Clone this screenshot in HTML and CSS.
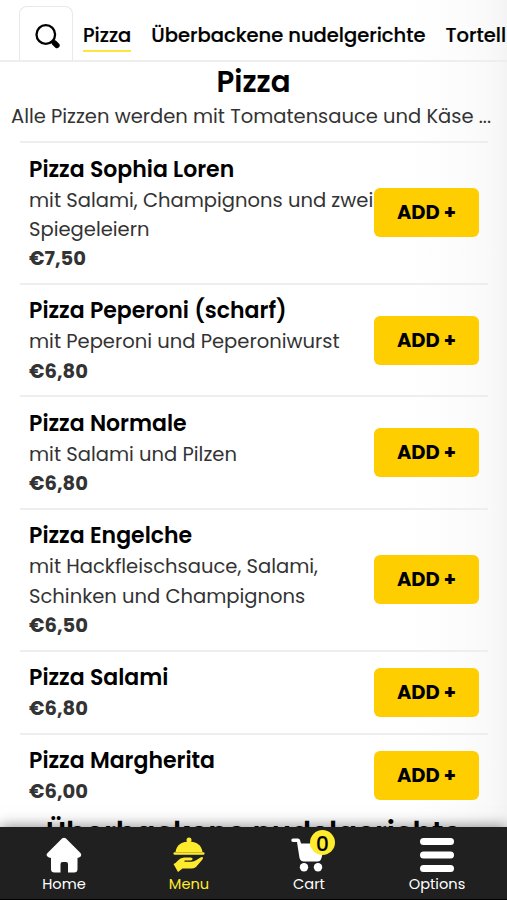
FILE: index.html
```html
<!DOCTYPE html>
<html lang="de">
<head>
<meta charset="utf-8">
<title>Pizza</title>
<link rel="stylesheet" href="styles.css">
</head>
<body>
<div class="app">
  <header class="tabs">
    <button class="search" aria-label="Suche">
      <svg width="26" height="26" viewBox="0 0 26 26"><circle cx="10.800" cy="10.500" r="9.300" fill="none" stroke="#000" stroke-width="2.300"/><path d="M17.500 17l1.500 1.500" stroke="#000" stroke-width="2.500"/><path d="M19.200 18.800l2.800 2.700" stroke="#000" stroke-width="5.400" stroke-linecap="round"/></svg>
    </button>
    <a class="tab active">Pizza</a>
    <a class="tab">Überbackene nudelgerichte</a>
    <a class="tab">Tortell</a>
  </header>
  <main>
    <h1 class="heading">Pizza</h1>
    <p class="intro">Alle Pizzen werden mit Tomatensauce und Käse ...</p>
    <ul class="list">
      <li class="item"><div class="info"><h2>Pizza Sophia Loren</h2><p>mit Salami, Champignons und zwei<br>Spiegeleiern</p><b>€7,50</b></div><button class="add">ADD +</button></li>
      <li class="item"><div class="info"><h2>Pizza Peperoni (scharf)</h2><p>mit Peperoni und Peperoniwurst</p><b>€6,80</b></div><button class="add">ADD +</button></li>
      <li class="item"><div class="info"><h2>Pizza Normale</h2><p>mit Salami und Pilzen</p><b>€6,80</b></div><button class="add">ADD +</button></li>
      <li class="item"><div class="info"><h2>Pizza Engelche</h2><p>mit Hackfleischsauce, Salami,<br>Schinken und Champignons</p><b>€6,50</b></div><button class="add">ADD +</button></li>
      <li class="item"><div class="info"><h2>Pizza Salami</h2><b>€6,80</b></div><button class="add">ADD +</button></li>
      <li class="item"><div class="info"><h2>Pizza Margherita</h2><b>€6,00</b></div><button class="add">ADD +</button></li>
    </ul>
    <h1 class="heading second">Überbackene nudelgerichte</h1>
  </main>
  <nav class="bottom">
    <a class="link home"><svg width="36" height="36" viewBox="0 0 36 36"><path d="M16 1.500Q18 0 20 1.500L34.500 16Q36.500 19 33 20.500L31.500 21V32Q31.500 35.500 28 35.500H22V27Q22 25 20 25H16.500Q14.500 25 14.500 27V35.500H8.500Q5 35.500 5 32V21L3 20.500Q-1 19 1.500 16Z" fill="#fff"/></svg><span>Home</span></a>
    <a class="link menu"><svg width="34" height="36" viewBox="0 0 34 36"><g fill="#ffeb2e"><circle cx="17" cy="3" r="2.500"/><path d="M3.500 15C4.500 8 9.500 4.500 17 4.500S29.500 8 30.500 15Z"/><rect x="1.500" y="15.200" width="31" height="2.600" rx="1.200"/><path d="M1.500 27Q4 26 6 23.500Q8 21 12 20.500H18.500Q21 20.500 20.500 22.300Q20.200 23.500 18 23.500H12.500V24.800H19.500Q22 24.800 24.500 23L28.500 20.500Q31 19.500 31 20.800Q31 21.800 29.800 23.300L24 30Q22 31.500 19 31.500H10.500L6 35Z"/></g></svg><span>Menu</span></a>
    <a class="link cart"><svg width="36" height="36" viewBox="0 0 36 36"><g fill="#fff"><path d="M2 1.500H7Q8.500 1.500 9 3L10 6.500H34L30.500 21Q29.500 24.500 26.500 24.500H13Q9.500 24.500 8.500 21L6 5H2A1.750 1.750 0 0 1 2 1.500Z"/><circle cx="13" cy="30.300" r="4.200"/><circle cx="27" cy="30.300" r="4.200"/></g></svg><span>Cart</span><i class="badge">0</i></a>
    <a class="link options"><svg width="36" height="36" viewBox="0 0 36 36"><g fill="#fff"><rect x="1" y="1" width="34" height="7" rx="3.500"/><rect x="1" y="14.500" width="34" height="7" rx="3.500"/><rect x="1" y="28" width="34" height="7" rx="3.500"/></g></svg><span>Options</span></a>
  </nav>
</div>
</body>
</html>
```
FILE: styles.css
```css
* { box-sizing: border-box; margin: 0; padding: 0; }
body { font-family: Poppins, Inter, sans-serif; color: #000; overflow: hidden; }
.app { height: 900px; display: flex; flex-direction: column; overflow: hidden; background: linear-gradient(90deg, #fff 410px, #fcfcfc 460px, #f9f9f9 490px, #f4f4f4 507px); }
.tabs { height: 62px; flex: none; display: flex; padding-left: 19px; border-bottom: 2px solid #eee; white-space: nowrap; overflow: hidden; }
.search { width: 54px; height: 55px; margin-top: 6px; flex: none; border: 1.500px solid #e9e9e9; border-bottom: 0; border-radius: 8px 8px 0 0; background: #fff; padding: 6px 0 0 15px; text-align: left; }
.search svg { display: block; }
.tab { height: 28px; margin: 24px 0 0 20px; font-size: 19.500px; line-height: 24px; font-weight: 500; flex: none; -webkit-text-stroke: .2px #000; }
.search + .tab { margin-left: 10px; }
.active { border-bottom: 2px solid #ffe63b; }
main { flex: 1; min-height: 0; overflow: hidden; }
.heading { height: 39px; line-height: 39px; font-size: 29.250px; font-weight: 600; text-align: center; white-space: nowrap; }
.intro { height: 40px; padding-left: 11px; font-size: 19.500px; line-height: 31px; color: #333; white-space: nowrap; }
.list { list-style: none; margin: 0 19px 0 20px; }
.item { display: flex; justify-content: space-between; align-items: center; border-top: 2px solid #eee; padding: 9.500px 9px; }
.info { width: 345px; flex: none; white-space: nowrap; color: #333; font-size: 19.550px; line-height: 29.250px; }
.info h2 { color: #000; font-size: 22px; line-height: 33px; font-weight: 600; }
.info b { display: block; font-size: 19.500px; font-weight: 700; }
.add { width: 105px; height: 49px; flex: none; border: 0; border-radius: 6px; background: #ffce00; color: #000; font: 700 19.500px Poppins, Inter, sans-serif; }
.second { margin-top: -3px; }
.bottom { height: 73px; flex: none; display: flex; position: relative; background: #202020; box-shadow: 0 0 14px rgba(0, 0, 0, .5); border-bottom: 1px solid #000; }
.link { display: flex; flex-direction: column; align-items: center; padding-top: 10px; color: #fff; font-size: 14.600px; line-height: 18px; position: relative; }
.link svg { display: block; margin-bottom: 2px; }
.home { width: 128px; }
.menu { width: 122px; color: #ffeb2e; }
.cart { width: 118px; }
.options { width: 138px; }
.badge { position: absolute; left: 60px; top: 3px; width: 25px; height: 25px; border-radius: 50%; background: #ffeb2e; color: #000; font: 500 20px/28px Poppins, Inter, sans-serif; text-align: center; -webkit-text-stroke: .2px #000; }
```
